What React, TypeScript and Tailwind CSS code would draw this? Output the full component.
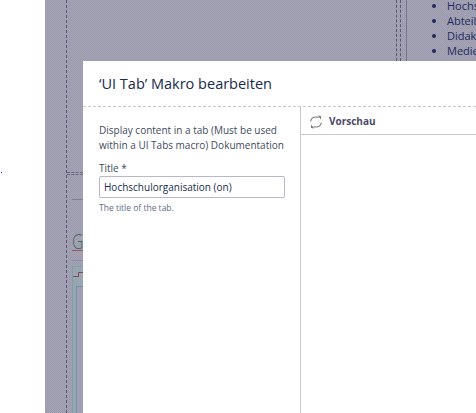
import React from "react";

const font = { fontFamily: '"Open Sans", "Noto Sans", sans-serif' };

function RefreshIcon() {
  return (
    <svg width="14" height="14" viewBox="0 0 14 14" fill="none" stroke="#7a7a7a" strokeWidth="1.1">
      <path d="M1.6 6.5C2 4 4.2 2 7 2c.9 0 1.7.2 2.4.6" />
      <path d="M8.6 .6 12 1v3.6z" fill="#7a7a7a" stroke="none" />
      <path d="M12.4 7.5C12 10 9.8 12 7 12c-.9 0-1.7-.2-2.4-.6" />
      <path d="M5.4 13.4 2 13V9.4z" fill="#7a7a7a" stroke="none" />
    </svg>
  );
}

export default function App() {
  return (
    <div className="flex h-[413px] w-[476px] overflow-hidden bg-white" style={font}>
      <div className="flex w-[45px] shrink-0 flex-col pl-[1px] pt-[172px]">
        <div className="h-[1px] w-[1px] bg-[#3030e0]" />
      </div>
      <div className="relative flex flex-1 bg-[#9f9fb1] bg-[repeating-conic-gradient(#9b9bad_0_25%,#a4a4b6_0_50%)] bg-[length:2px_2px]">
        {/* page content behind the dialog */}
        <div className="ml-[21px] flex h-full w-[330px] shrink-0 flex-col border-l border-dashed border-[#5f5475] pt-[172px]">
          <div className="h-[3px] w-[16px] border-y border-dashed border-[#6e6784]" />
          <div className="ml-[5px] mt-[24px] h-[1px] w-[12px] bg-[#76809a]" />
          <div className="ml-[5px] mt-[32px] h-[18px] origin-left scale-x-[0.75] text-[21px] font-light leading-[18px] text-[#3f6a60]">G</div>
          <div className="ml-[5px] h-[1px] w-[12px] bg-[#a2506a]" />
          <div className="ml-[5px] mt-[9px] h-[1px] w-[12px] bg-[#7f8fb0]" />
          <div className="ml-[5px] mt-[5px] flex w-[12px] flex-1 flex-col border-l border-t border-[#7f9fa4] bg-[#98a6b2] pt-[5px]">
            <div className="flex h-[5px]">
              <div className="h-full w-[5px] border-b border-[#8a4a55]" />
              <div className="h-full flex-1 border-l border-t border-[#8a4a55]" />
            </div>
            <div className="ml-[3px] mt-[9px] flex-1 border-l border-t border-[#7390ac] bg-[#9f9fb4]" />
          </div>
        </div>
        <div className="flex h-[61px] gap-[3px]">
          <div className="border-l border-dashed border-[#5f5475]" />
          <div className="border-l border-dashed border-[#5f5475]" />
          <div className="ml-[2px] border-l border-[#77778c]" />
        </div>
        <ul className="ml-[25px] mt-[-2px] list-disc whitespace-nowrap pl-[15px] text-[11px] leading-[15px] text-[#1f2a5c]">
          <li>Hochschul</li>
          <li>Abteilung</li>
          <li>Didaktik</li>
          <li>Medien</li>
        </ul>

        {/* dialog */}
        <div className="absolute left-[38px] top-[61px] flex h-[352px] w-[393px] flex-col bg-white">
          <div className="flex h-[46px] shrink-0 items-center border-b border-dashed border-[#c4c8d8] pl-[16px] pt-[1px] text-[14.5px] text-[#172b4d]">
            ‘UI Tab’ Makro bearbeiten
          </div>
          <div className="flex flex-1">
            <div className="w-[218px] shrink-0 border-r border-[#c8c8d0] pl-[16px] pr-[8px] pt-[16px]">
              <p className="whitespace-nowrap text-[10px] leading-[15px] text-[#3f4a60]">
                Display content in a tab (Must be used
                <br />
                within a UI Tabs macro) Dokumentation
              </p>
              <label className="mt-[8px] block text-[10px] leading-[14px] text-[#3f4a60]">Title *</label>
              <div className="mt-[1px] flex h-[22px] w-[186px] items-center rounded-[2px] border border-[#b8b8c8] pl-[4px] text-[10px] text-[#172b4d]">
                Hochschulorganisation (on)
              </div>
              <p className="mt-[4px] text-[8.5px] leading-[12px] text-[#5e6c84]">The title of the tab.</p>
            </div>
            <div className="flex-1">
              <div className="flex h-[28px] items-center gap-[6px] border-b border-[#c8c8d0] pl-[8px] pt-[2px] text-[10px] font-bold text-[#4a4a68]">
                <RefreshIcon />
                <span>Vorschau</span>
              </div>
            </div>
          </div>
        </div>
      </div>
    </div>
  );
}
